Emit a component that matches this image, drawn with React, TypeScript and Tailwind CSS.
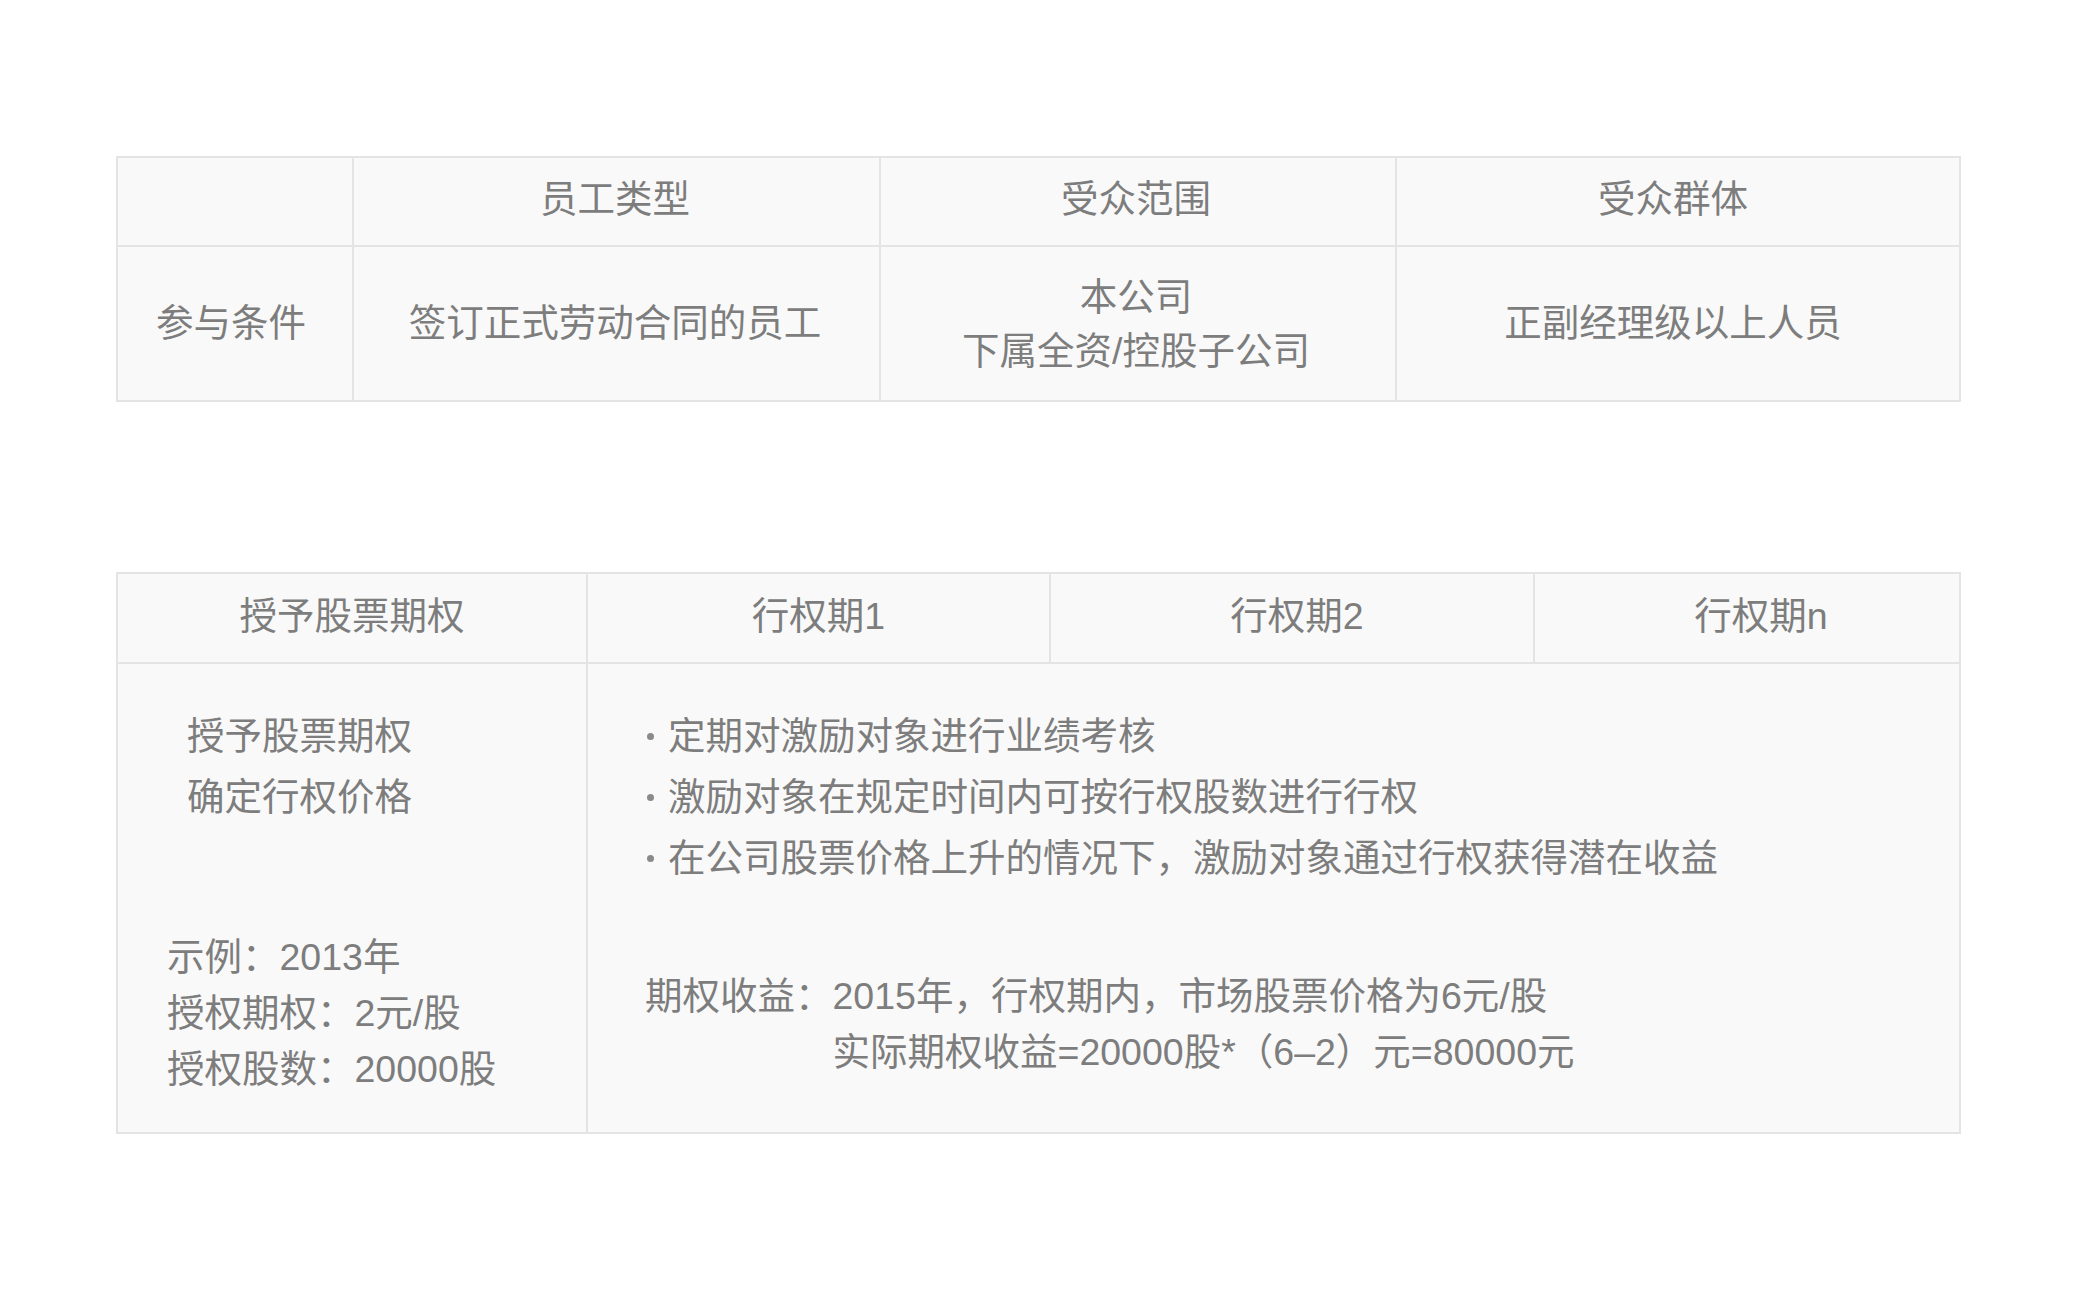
const FONT = "font-['Liberation_Sans','Noto_Sans_CJK_SC',sans-serif]";

function Cell({ children, className = "" }: { children?: React.ReactNode; className?: string }) {
  return <div className={`bg-[#f9f9f9] flex items-center justify-center text-center ${className}`}>{children}</div>;
}

function Bullet({ children }: { children: React.ReactNode }) {
  return (
    <div className="flex items-center h-[61px]">
      <span className="w-[7px] h-[7px] rounded-full bg-[#8a8a8a] mr-[14px]" />
      <span>{children}</span>
    </div>
  );
}

export default function App() {
  return (
    <div className={`min-h-[1297px] bg-white pt-[156px] text-[37.5px] text-[#7d7d7d] ${FONT}`}>
      {/* 参与条件 */}
      <div className="ml-[116px] w-[1845px] grid grid-cols-[234px_525px_514px_562px] grid-rows-[87px_153px] gap-[2px] p-[2px] bg-[#e4e4e4]">
        <Cell />
        <Cell className="pb-[4px] pr-[3px]">员工类型</Cell>
        <Cell className="pb-[4px] pr-[4px]">受众范围</Cell>
        <Cell className="pb-[4px] pr-[10px]">受众群体</Cell>
        <Cell className="pr-[8px]">参与条件</Cell>
        <Cell className="pr-[3px]">签订正式劳动合同的员工</Cell>
        <Cell className="flex-col leading-[54px] pr-[4px]">
          <div>本公司</div>
          <div>下属全资/控股子公司</div>
        </Cell>
        <Cell className="pr-[10px]">正副经理级以上人员</Cell>
      </div>

      {/* 股票期权 */}
      <div className="mt-[170px] ml-[116px] w-[1845px] grid grid-cols-[468px_461px_482px_424px] grid-rows-[88px_468px] gap-[2px] p-[2px] bg-[#e4e4e4]">
        <Cell className="pb-[4px]">授予股票期权</Cell>
        <Cell className="pb-[4px]">行权期1</Cell>
        <Cell className="pb-[4px] pl-[10px]">行权期2</Cell>
        <Cell className="pb-[4px] pl-[28px]">行权期n</Cell>

        <div className="bg-[#f9f9f9] pt-[42px] pl-[49px]">
          <div className="pl-[20px] leading-[61px]">
            <div>授予股票期权</div>
            <div>确定行权价格</div>
          </div>
          <div className="mt-[101px] leading-[56px]">
            <div>示例：2013年</div>
            <div>授权期权：2元/股</div>
            <div>授权股数：20000股</div>
          </div>
        </div>

        <div className="col-span-3 bg-[#f9f9f9] pt-[42px] pl-[57px]">
          <div className="pl-[2px]">
            <Bullet>定期对激励对象进行业绩考核</Bullet>
            <Bullet>激励对象在规定时间内可按行权股数进行行权</Bullet>
            <Bullet>在公司股票价格上升的情况下，激励对象通过行权获得潜在收益</Bullet>
          </div>
          <div className="mt-[79px] flex leading-[56px]">
            <span>期权收益：</span>
            <div>
              <div>2015年，行权期内，市场股票价格为6元/股</div>
              <div>实际期权收益=20000股*（6–2）元=80000元</div>
            </div>
          </div>
        </div>
      </div>
    </div>
  );
}
